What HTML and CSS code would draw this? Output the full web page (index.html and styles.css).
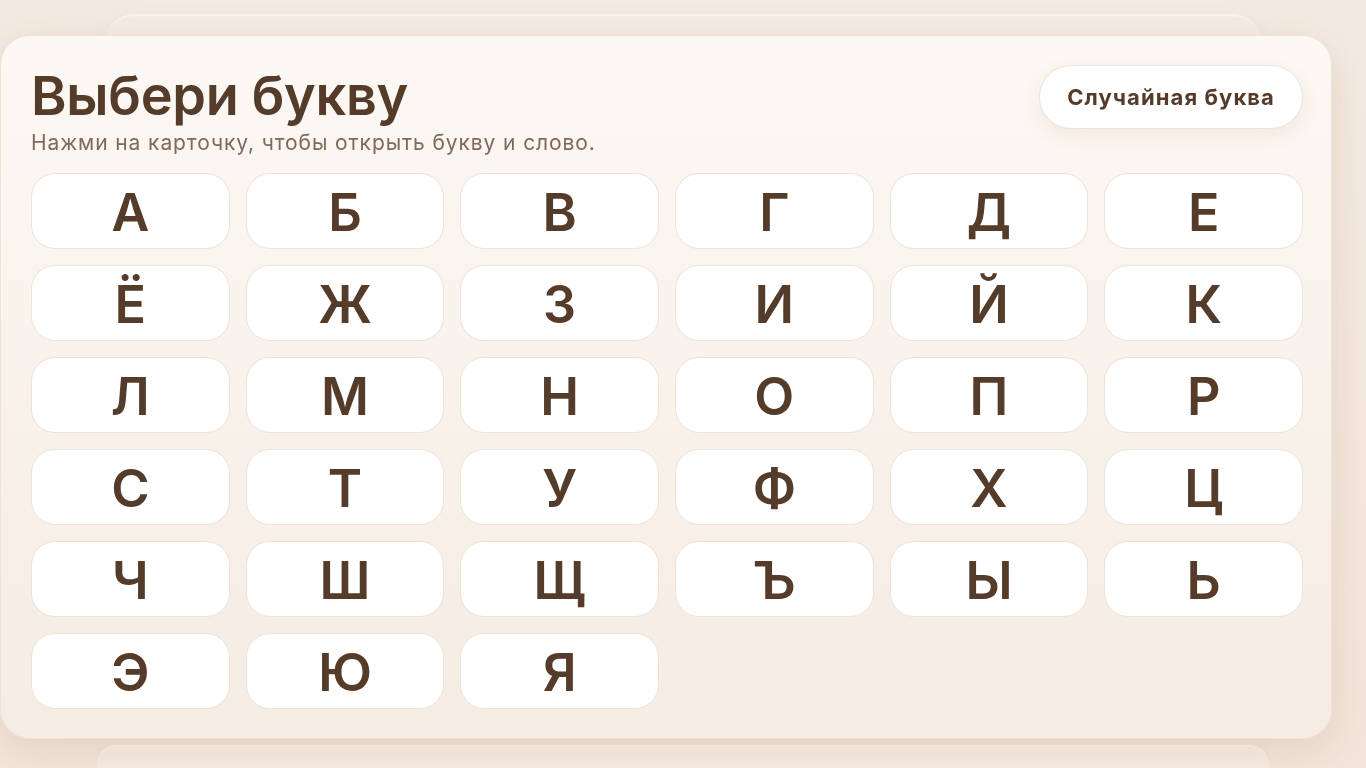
FILE: index.html
```html
<!DOCTYPE html>
<html lang="ru">
<head>
<meta charset="utf-8">
<title>Выбери букву</title>
<link rel="stylesheet" href="styles.css">
</head>
<body>
<div class="page">
  <div class="bg-card bg-card-top"></div>
  <div class="bg-spacer"></div>
  <div class="bg-card bg-card-bottom"></div>
</div>
<div class="overlay">
  <section class="modal">
    <header class="modal-head">
      <div class="titles">
        <h1 class="title">Выбери букву</h1>
        <p class="subtitle">Нажми на карточку, чтобы открыть букву и слово.</p>
      </div>
      <button class="random-btn">Случайная буква</button>
    </header>
    <div class="grid">
      <button class="letter">А</button><button class="letter">Б</button><button class="letter">В</button><button class="letter">Г</button><button class="letter">Д</button><button class="letter">Е</button>
      <button class="letter">Ё</button><button class="letter">Ж</button><button class="letter">З</button><button class="letter">И</button><button class="letter">Й</button><button class="letter">К</button>
      <button class="letter">Л</button><button class="letter">М</button><button class="letter">Н</button><button class="letter">О</button><button class="letter">П</button><button class="letter">Р</button>
      <button class="letter">С</button><button class="letter">Т</button><button class="letter">У</button><button class="letter">Ф</button><button class="letter">Х</button><button class="letter">Ц</button>
      <button class="letter">Ч</button><button class="letter">Ш</button><button class="letter">Щ</button><button class="letter">Ъ</button><button class="letter">Ы</button><button class="letter">Ь</button>
      <button class="letter">Э</button><button class="letter">Ю</button><button class="letter">Я</button>
    </div>
  </section>
</div>
</body>
</html>
```
FILE: styles.css
```css
* { box-sizing: border-box; }
html, body { margin: 0; height: 100%; }
body {
  font-family: Inter, "Open Sans", sans-serif;
  color: #553b29;
  background: linear-gradient(180deg, #f5efe8 0%, #f3e6dc 100%);
  overflow: hidden;
}
.page {
  width: 1172px;
  height: 768px;
  overflow: hidden;
  margin: 0 auto;
  padding-top: 14px;
  display: flex;
  flex-direction: column;
}
.bg-card {
  flex: none;
  background: #f8f1ea;
  border-radius: 30px;
  border-top: 2px solid #fffdfb;
  box-shadow: 0 6px 20px rgba(150, 110, 80, 0.08);
}
.bg-card-top { height: 60px; margin: 0 7px 0 8px; }
.bg-spacer { flex: none; height: 671px; }
.bg-card-bottom { height: 40px; }

.overlay {
  position: fixed;
  inset: 0;
  padding: 35px 34px 0 0;
  background: rgba(240, 226, 214, 0.35);
}
.modal {
  width: 1332px;
  background: linear-gradient(180deg, #fcf8f4 0%, #f5ece3 100%);
  border: 1px solid #efe3d8;
  border-radius: 30px;
  padding: 29px 28px 29px 30px;
  box-shadow: 0 10px 40px rgba(160, 110, 70, 0.18);
}
.modal-head {
  display: flex;
  justify-content: space-between;
  align-items: flex-start;
}
.title {
  margin: 0;
  font-size: 54px;
  font-weight: 600;
  line-height: 62px;
  letter-spacing: -0.3px;
}
.subtitle {
  margin: 2px 0 0;
  font-size: 21px;
  line-height: 28px;
  letter-spacing: 0.9px;
  color: #80695a;
}
.random-btn {
  font-family: inherit;
  height: 64px;
  padding: 0 27px;
  border: 1px solid #efe2d6;
  border-radius: 32px;
  background: #fff;
  color: #553b29;
  font-size: 22px;
  font-weight: 700;
  letter-spacing: 1.1px;
  box-shadow: 0 6px 18px rgba(160, 110, 70, 0.1);
}
.grid {
  margin-top: 16px;
  display: grid;
  grid-template-columns: repeat(6, 1fr);
  gap: 16px;
}
.letter {
  font-family: inherit;
  height: 76px;
  border: 1px solid #efe2d7;
  border-radius: 24px;
  background: #fff;
  color: #553b29;
  font-size: 52px;
  font-weight: 600;
  line-height: 1;
  padding: 4px 0 0;
}
```
